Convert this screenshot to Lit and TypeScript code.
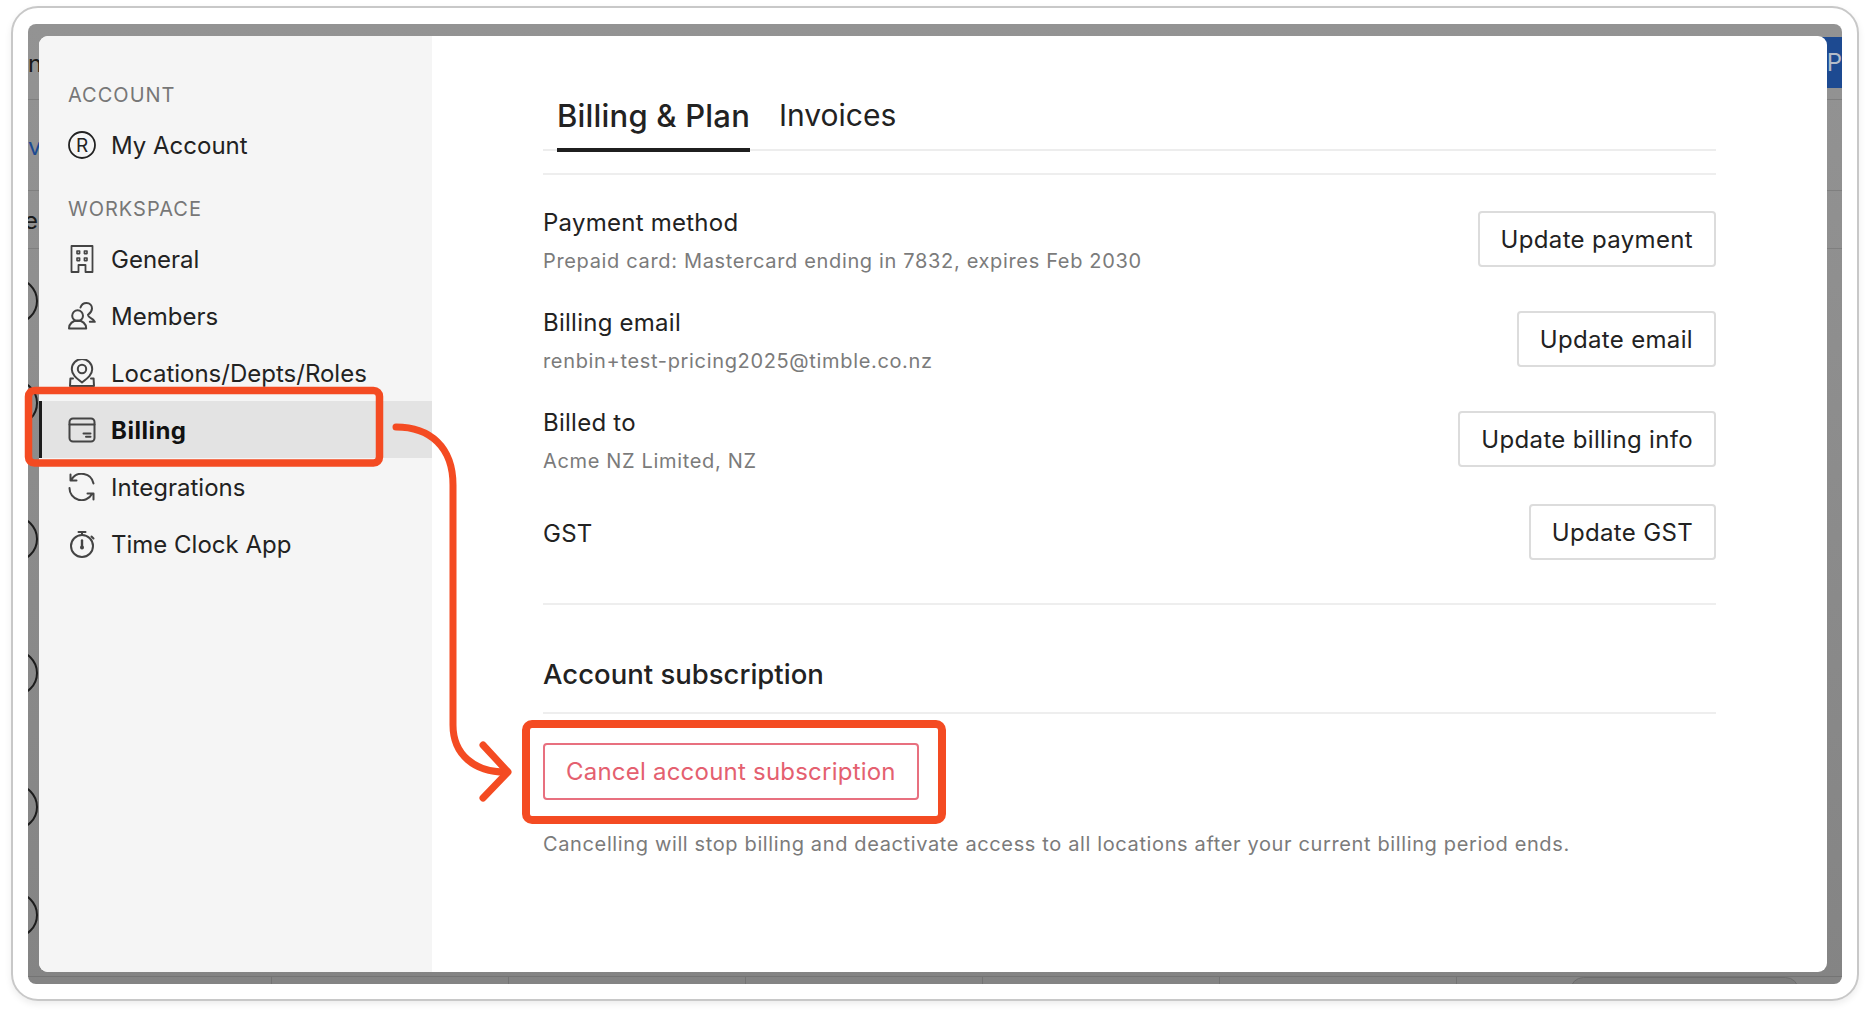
import { LitElement, html, css, svg } from 'lit';
import { customElement } from 'lit/decorators.js';

const stroke = (body: unknown) => html`<svg class="icon" viewBox="0 0 28 28" fill="none" stroke="currentColor" stroke-width="2" stroke-linecap="round" stroke-linejoin="round">${body}</svg>`;

const icons: Record<string, unknown> = {
  account: html`<svg class="icon account" viewBox="0 0 28 28" fill="none" stroke="currentColor" stroke-width="1.8"><circle cx="14" cy="14" r="13"></circle><text x="14" y="20.6" text-anchor="middle" font-size="19" stroke="none" fill="currentColor" class="glyph">R</text></svg>`,
  general: stroke(svg`<path d="M3.5 27V1h21v26h-7v-7h-7v7z" stroke-width="1.8"/><rect x="9" y="6" width="2.6" height="2.6" stroke-width="1.6"/><rect x="16.4" y="6" width="2.6" height="2.6" stroke-width="1.6"/><rect x="9" y="13" width="2.6" height="2.6" stroke-width="1.6"/><rect x="16.4" y="13" width="2.6" height="2.6" stroke-width="1.6"/>`),
  members: stroke(svg`<circle cx="9.6" cy="13.7" r="5.4"/><path d="M1 26.5c0-5 4-8 8.6-8s8.6 3 8.6 8zM1 26.5h17.2"/><path d="M12.5 5.5C13.5 2.2 16.2 1 18.5 1 22 1 24 3.6 24 6.5c0 3-2 4.8-4 6.3.2 1.2 1 2.2 2.5 3 2 1 3.5 2 4.3 4h-5"/>`),
  locations: stroke(svg`<path d="M14 23.5C8 19 3.8 15.5 3.8 10.2a10.2 10.2 0 0 1 20.4 0C24.2 15.5 20 19 14 23.5z"/><circle cx="14" cy="10" r="4.2"/><path d="M5 19.5H2.4L2 27H26L25.6 19.5H23"/>`),
  billing: stroke(svg`<rect x="1.5" y="2.5" width="25" height="23" rx="3.5"/><path d="M1.5 8.5h25M15.5 17.5h7M18 20.7h4.5"/>`),
  integrations: stroke(svg`<path d="M25.5 10.5A12 12 0 0 0 3.5 6.5M2.5 1.5V7.5H8.5M1.5 15A12 12 0 0 0 24 21M25.5 26.5V20.5H19.5"/>`),
  clock: stroke(svg`<circle cx="14" cy="16" r="11"/><path d="M10.5 2h7M14 2v3M23.5 6.5l2 2"/><path d="M14 10.5v6.5" stroke-width="2.4"/><circle cx="14" cy="17.5" r="1" fill="currentColor"/>`),
};

const rows = [
  { title: 'Payment method', sub: 'Prepaid card: Mastercard ending in 7832, expires Feb 2030', action: 'Update payment' },
  { title: 'Billing email', sub: 'renbin+test-pricing2025@timble.co.nz', action: 'Update email' },
  { title: 'Billed to', sub: 'Acme NZ Limited, NZ', action: 'Update billing info' },
  { title: 'GST', sub: '', action: 'Update GST' },
];

const workspace = [
  { icon: 'general', label: 'General' },
  { icon: 'members', label: 'Members' },
  { icon: 'locations', label: 'Locations/Depts/Roles' },
  { icon: 'billing', label: 'Billing', active: true },
  { icon: 'integrations', label: 'Integrations' },
  { icon: 'clock', label: 'Time Clock App' },
];

@customElement('app-root')
export class AppRoot extends LitElement {
  static styles = css`
    :host {
      display: block;
      position: relative;
      width: 1869px;
      height: 1016px;
      background: #fff;
      overflow: hidden;
      font-family: Inter, 'Liberation Sans', sans-serif;
      color: #222;
      box-sizing: border-box;
      padding: 6px 10px 15px 11px;
    }
    .frame {
      box-sizing: border-box;
      height: 995px;
      border: 2px solid #c8c8c8;
      border-radius: 27px;
      padding: 16px 15px 14px 15px;
      box-shadow: 0 3px 7px rgba(0, 0, 0, 0.08);
    }
    .backdrop {
      position: relative;
      box-sizing: border-box;
      height: 960px;
      padding: 12px 15px 12px 11px;
      border-radius: 8px;
      overflow: hidden;
      background: linear-gradient(#939393, #848484);
    }
    .peek {
      position: absolute;
      font-size: 24px;
      line-height: 28px;
      color: #1a1a1a;
    }
    .peek-n { left: 0; top: 26px; }
    .peek-v { left: 0; top: 109px; color: #1d4a91; }
    .peek-e { left: -4px; top: 183px; }
    .hline {
      position: absolute;
      left: 0;
      right: 0;
      height: 1px;
      background: #7f7f7f;
    }
    .arc {
      position: absolute;
      left: -36px;
      width: 46px;
      height: 46px;
      border: 2px solid #1c1c1c;
      border-radius: 50%;
      box-sizing: border-box;
    }
    .blue {
      position: absolute;
      right: 0;
      top: 13px;
      width: 20px;
      height: 51px;
      background: #1d4a91;
      color: #b5bcc8;
      font-size: 24px;
      line-height: 51px;
      text-align: right;
      overflow: hidden;
    }
    .ticks {
      position: absolute;
      left: 0;
      right: 0;
      bottom: 0;
      height: 8px;
      background: repeating-linear-gradient(90deg, transparent 0 236px, #747474 236px 237px) 7px 0;
      border-top: 1px solid #747474;
      box-sizing: border-box;
    }
    .pill {
      position: absolute;
      left: 1542px;
      bottom: -20px;
      width: 227px;
      height: 25px;
      border: 1px solid #6d6d6d;
      border-radius: 16px;
      background: #7c7c7c;
    }
    .modal {
      position: relative;
      display: flex;
      height: 936px;
      border-radius: 9px;
      overflow: hidden;
      background: #fff;
    }
    .sidebar {
      flex: 0 0 393px;
      box-sizing: border-box;
      background: #f5f5f5;
      padding-top: 36px;
    }
    .group-label {
      box-sizing: border-box;
      height: 44px;
      margin-top: 13px;
      padding: 2px 0 0 29px;
      display: flex;
      align-items: center;
      font-size: 20px;
      letter-spacing: 1px;
      color: #777;
    }
    .group-label:first-child {
      margin-top: 0;
    }
    .item {
      display: flex;
      align-items: center;
      gap: 15px;
      height: 57px;
      padding: 1px 0 0 29px;
      box-sizing: border-box;
      font-size: 24px;
      color: #222;
    }
    .item .icon {
      color: #444;
    }
    .item .icon.account {
      color: #222;
    }
    .item.active {
      background: #e3e3e3;
      box-shadow: inset 3px 0 0 #1c1c1c;
      font-weight: 700;
      letter-spacing: 0.5px;
      color: #111;
    }
    .icon {
      width: 28px;
      height: 28px;
      flex: none;
    }
    .glyph {
      font-family: Inter, sans-serif;
    }
    .main {
      flex: 1;
      box-sizing: border-box;
      padding: 0 111px 0 111px;
    }
    .tabs {
      display: flex;
      gap: 29px;
      height: 115px;
      padding-left: 14px;
      border-bottom: 2px solid #ededed;
      box-sizing: border-box;
    }
    .tab {
      display: flex;
      align-items: center;
      height: 116px;
      padding-top: 42px;
      box-sizing: border-box;
      font-size: 30px;
      color: #222;
    }
    .tab.active {
      font-size: 31px;
      font-weight: 500;
      letter-spacing: 0.2px;
      box-shadow: inset 0 -4px 0 #1f1f1f;
    }
    .rule {
      height: 2px;
      background: #eeeeee;
    }
    .top-rule {
      margin-top: 22px;
    }
    .list {
      padding-top: 30px;
    }
    .row {
      display: flex;
      justify-content: space-between;
      align-items: flex-start;
      height: 100px;
    }
    .row.plain {
      height: 56px;
      align-items: center;
      margin-top: -1px;
    }
    .row-title {
      font-size: 24px;
      line-height: 36px;
      letter-spacing: 0.25px;
      color: #222;
    }
    .row.plain .row-title {
      padding-top: 4px;
    }
    .row-sub {
      font-size: 20px;
      line-height: 36px;
      letter-spacing: 0.66px;
      color: #7b7b7b;
      margin-top: 2px;
    }
    .btn {
      box-sizing: border-box;
      height: 56px;
      margin-top: 6px;
      padding: 0 21px;
      border: 2px solid #dcdcdc;
      border-radius: 4px;
      background: #fff;
      font: inherit;
      font-size: 24px;
      letter-spacing: 0.34px;
      color: #222;
    }
    .row.plain .btn {
      margin-top: 0;
    }
    .mid-rule {
      margin-top: 43px;
    }
    h2 {
      box-sizing: border-box;
      height: 73px;
      padding-bottom: 3px;
      display: flex;
      align-items: center;
      margin: 34px 0 0;
      font-size: 27.5px;
      font-weight: 500;
      color: #222;
    }
    .danger-row {
      display: flex;
    }
    .danger {
      box-sizing: border-box;
      height: 57px;
      margin-top: 29px;
      padding: 0 21px;
      border: 2px solid #e8707f;
      border-radius: 4px;
      background: #fff;
      font: inherit;
      font-size: 24px;
      letter-spacing: 0.22px;
      color: #e4606f;
    }
    .note {
      margin-top: 26px;
      font-size: 20px;
      line-height: 36px;
      letter-spacing: 0.63px;
      color: #7b7b7b;
    }
    .marks {
      position: absolute;
      left: 0;
      top: 0;
      width: 1869px;
      height: 1016px;
      pointer-events: none;
    }
  `;

  render() {
    const arcs = [277, 379, 515, 649, 783, 891];
    return html`
      <div class="frame">
        <div class="backdrop">
          <div class="hline" style="top:75px"></div>
          <div class="hline" style="top:166px"></div>
          <div class="hline" style="top:224px"></div>
          <span class="peek peek-n">n</span>
          <span class="peek peek-v">v</span>
          <span class="peek peek-e">e</span>
          ${arcs.map((top) => html`<div class="arc" style="top:${top - 23}px"></div>`)}
          <div class="blue">P</div>
          <div class="ticks"></div>
          <div class="pill"></div>
          <div class="modal">
            <aside class="sidebar">
              <div class="group-label">ACCOUNT</div>
              <div class="item">${icons.account}<span>My Account</span></div>
              <div class="group-label">WORKSPACE</div>
              ${workspace.map(
                (it) => html`<div class="item ${it.active ? 'active' : ''}">${icons[it.icon]}<span>${it.label}</span></div>`,
              )}
            </aside>
            <section class="main">
              <div class="tabs">
                <div class="tab active">Billing &amp; Plan</div>
                <div class="tab">Invoices</div>
              </div>
              <div class="rule top-rule"></div>
              <div class="list">
                ${rows.map(
                  (r) => html`
                    <div class="row ${r.sub ? '' : 'plain'}">
                      <div>
                        <div class="row-title">${r.title}</div>
                        ${r.sub ? html`<div class="row-sub">${r.sub}</div>` : ''}
                      </div>
                      <button class="btn">${r.action}</button>
                    </div>
                  `,
                )}
              </div>
              <div class="rule mid-rule"></div>
              <h2>Account subscription</h2>
              <div class="rule"></div>
              <div class="danger-row"><button class="danger">Cancel account subscription</button></div>
              <div class="note">Cancelling will stop billing and deactivate access to all locations after your current billing period ends.</div>
            </section>
          </div>
        </div>
      </div>
      <svg class="marks" viewBox="0 0 1869 1016" fill="none" stroke="#f44b22" stroke-linecap="round" stroke-linejoin="round">
        <rect x="28.5" y="390.5" width="351" height="72.5" rx="6" stroke-width="7.5"></rect>
        <rect x="526" y="724" width="416" height="96" rx="6" stroke-width="8"></rect>
        <path d="M396 427C430 427 453 447 453 485V725C453 755 475 772 505 772" stroke-width="7"></path>
        <path d="M483 745 508 772 483 798" stroke-width="7"></path>
      </svg>
    `;
  }
}
